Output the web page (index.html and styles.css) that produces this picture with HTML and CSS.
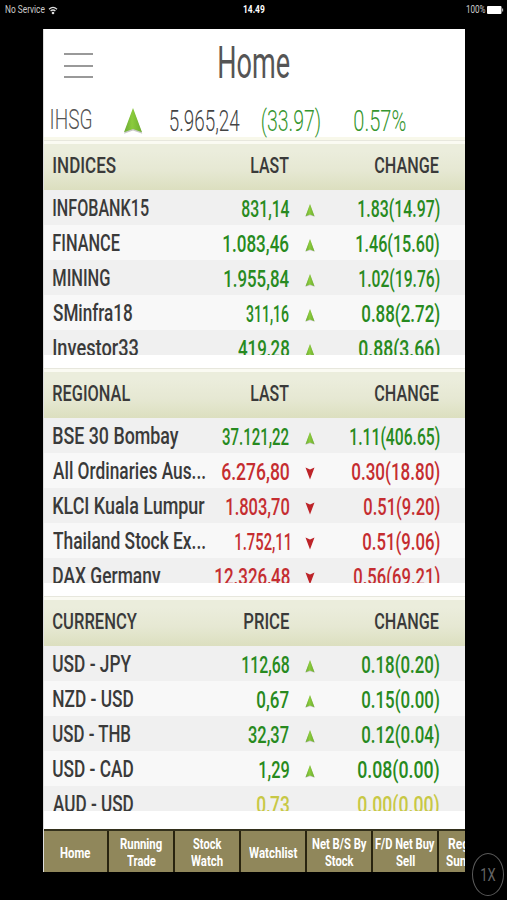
FILE: index.html
```html
<!DOCTYPE html>
<html lang="en">
<head>
<meta charset="utf-8">
<title>Home</title>
<link rel="stylesheet" href="styles.css">
</head>
<body>
<svg class="defs" width="0" height="0" aria-hidden="true">
  <defs>
    <linearGradient id="green" x1="0" y1="0" x2="1" y2="0"><stop offset="0" stop-color="#6aaa35"/><stop offset=".45" stop-color="#8bcb3c"/><stop offset="1" stop-color="#6cad30"/></linearGradient>
    <symbol id="up" viewBox="0 0 20 26"><path d="M10 .5 19.3 25 10 21.8 1 25Z" fill="#9a9a9a" opacity=".55" transform="translate(0 .7)"/><path d="M10 0 19 24.3 10 21 1 24.3Z" fill="url(#green)"/></symbol>
    <symbol id="down" viewBox="0 0 20 26"><path d="M1 1 10 5 19 1 10 25Z" fill="#bd2328"/></symbol>
  </defs>
</svg>
<header class="status">
  <div class="status-side"><span class="fit" data-w="40">No Service</span>
    <svg class="wifi" viewBox="0 0 10 9"><path d="M1 3.2Q5-.4 9 3.2M2.6 5.1Q5 3 7.4 5.1" fill="none" stroke="#ddd" stroke-width="1.3"/><circle cx="5" cy="7" r="1.3" fill="#ddd"/></svg></div>
  <div class="status-time"><span class="fit" data-w="21.5">14.49</span></div>
  <div class="status-side status-right"><span class="fit" data-w="19.5">100%</span>
    <svg class="battery" viewBox="0 0 17 8"><rect width="14.5" height="8" rx="1" fill="#fff"/><path d="M15.3 2.6h.8v2.8h-.8z" fill="#fff"/></svg></div>
</header>
<main class="app">
  <div class="titlebar">
    <div class="menu"><i></i><i></i><i></i></div>
    <h1 class="title"><span class="fit" data-w="70.5">Home</span></h1>
  </div>
  <div class="ticker">
    <div class="t-name"><span class="fit" data-w="40.5">IHSG</span></div>
    <svg class="t-arrow"><use href="#up"/></svg>
    <div class="t-last"><span class="fit" data-w="70">5.965,24</span></div>
    <div class="t-points"><span class="fit" data-w="58">(33.97)</span></div>
    <div class="t-pct"><span class="fit" data-w="51.5">0.57%</span></div>
  </div>

  <section class="board">
    <div class="head"><div class="name"><span class="fit" data-w="62.5">INDICES</span></div><div class="num"><span class="fit" data-w="38">LAST</span></div><i></i><div class="num"><span class="fit" data-w="64">CHANGE</span></div></div>
    <div class="rows">
      <div class="row up"><div class="name"><span class="fit" data-w="96">INFOBANK15</span></div><div class="num"><span class="fit" data-w="47.5">831,14</span></div><svg class="mark"><use href="#up"/></svg><div class="num"><span class="fit" data-w="81.5">1.83(14.97)</span></div></div>
      <div class="row up"><div class="name"><span class="fit" data-w="67">FINANCE</span></div><div class="num"><span class="fit" data-w="66">1.083,46</span></div><svg class="mark"><use href="#up"/></svg><div class="num"><span class="fit" data-w="83">1.46(15.60)</span></div></div>
      <div class="row up"><div class="name"><span class="fit" data-w="57">MINING</span></div><div class="num"><span class="fit" data-w="65">1.955,84</span></div><svg class="mark"><use href="#up"/></svg><div class="num"><span class="fit" data-w="80.5">1.02(19.76)</span></div></div>
      <div class="row up"><div class="name"><span class="fit" data-w="79">SMinfra18</span></div><div class="num"><span class="fit" data-w="43">311,16</span></div><svg class="mark"><use href="#up"/></svg><div class="num"><span class="fit" data-w="77.5">0.88(2.72)</span></div></div>
      <div class="row up"><div class="name"><span class="fit" data-w="85">Investor33</span></div><div class="num"><span class="fit" data-w="51">419,28</span></div><svg class="mark"><use href="#up"/></svg><div class="num"><span class="fit" data-w="80.5">0.88(3.66)</span></div></div>
    </div>
  </section>

  <section class="board">
    <div class="head"><div class="name"><span class="fit" data-w="77">REGIONAL</span></div><div class="num"><span class="fit" data-w="38">LAST</span></div><i></i><div class="num"><span class="fit" data-w="64">CHANGE</span></div></div>
    <div class="rows">
      <div class="row up"><div class="name"><span class="fit" data-w="126">BSE 30 Bombay</span></div><div class="num"><span class="fit" data-w="67">37.121,22</span></div><svg class="mark"><use href="#up"/></svg><div class="num"><span class="fit" data-w="89.5">1.11(406.65)</span></div></div>
      <div class="row down"><div class="name"><span class="fit" data-w="152">All Ordinaries Aus...</span></div><div class="num"><span class="fit" data-w="67">6.276,80</span></div><svg class="mark"><use href="#down"/></svg><div class="num"><span class="fit" data-w="87.5">0.30(18.80)</span></div></div>
      <div class="row down"><div class="name"><span class="fit" data-w="151.5">KLCI Kuala Lumpur</span></div><div class="num"><span class="fit" data-w="63">1.803,70</span></div><svg class="mark"><use href="#down"/></svg><div class="num"><span class="fit" data-w="75.5">0.51(9.20)</span></div></div>
      <div class="row down"><div class="name"><span class="fit" data-w="152">Thailand Stock Ex...</span></div><div class="num"><span class="fit" data-w="54.5">1.752,11</span></div><svg class="mark"><use href="#down"/></svg><div class="num"><span class="fit" data-w="76.5">0.51(9.06)</span></div></div>
      <div class="row down"><div class="name"><span class="fit" data-w="108">DAX Germany</span></div><div class="num"><span class="fit" data-w="74.5">12.326,48</span></div><svg class="mark"><use href="#down"/></svg><div class="num"><span class="fit" data-w="85.5">0.56(69.21)</span></div></div>
    </div>
  </section>

  <section class="board">
    <div class="head"><div class="name"><span class="fit" data-w="84">CURRENCY</span></div><div class="num"><span class="fit" data-w="45.5">PRICE</span></div><i></i><div class="num"><span class="fit" data-w="64">CHANGE</span></div></div>
    <div class="rows">
      <div class="row up"><div class="name"><span class="fit" data-w="78">USD - JPY</span></div><div class="num"><span class="fit" data-w="47">112,68</span></div><svg class="mark"><use href="#up"/></svg><div class="num"><span class="fit" data-w="77">0.18(0.20)</span></div></div>
      <div class="row up"><div class="name"><span class="fit" data-w="80">NZD - USD</span></div><div class="num"><span class="fit" data-w="32">0,67</span></div><svg class="mark"><use href="#up"/></svg><div class="num"><span class="fit" data-w="77">0.15(0.00)</span></div></div>
      <div class="row up"><div class="name"><span class="fit" data-w="78">USD - THB</span></div><div class="num"><span class="fit" data-w="41">32,37</span></div><svg class="mark"><use href="#up"/></svg><div class="num"><span class="fit" data-w="77">0.12(0.04)</span></div></div>
      <div class="row up"><div class="name"><span class="fit" data-w="80">USD - CAD</span></div><div class="num"><span class="fit" data-w="30">1,29</span></div><svg class="mark"><use href="#up"/></svg><div class="num"><span class="fit" data-w="81">0.08(0.00)</span></div></div>
      <div class="row flat"><div class="name"><span class="fit" data-w="80">AUD - USD</span></div><div class="num"><span class="fit" data-w="32">0,73</span></div><i></i><div class="num"><span class="fit" data-w="81">0.00(0.00)</span></div></div>
    </div>
  </section>

  <nav class="tabs">
    <a class="tab"><span class="fit" data-w="30.5">Home</span></a>
    <a class="tab"><span class="fit" data-w="42">Running</span><span class="fit" data-w="29">Trade</span></a>
    <a class="tab"><span class="fit" data-w="28.5">Stock</span><span class="fit" data-w="32">Watch</span></a>
    <a class="tab"><span class="fit" data-w="48.5">Watchlist</span></a>
    <a class="tab"><span class="fit" data-w="55">Net B/S By</span><span class="fit" data-w="28.5">Stock</span></a>
    <a class="tab"><span class="fit" data-w="60">F/D Net Buy</span><span class="fit" data-w="18.5">Sell</span></a>
    <a class="tab"><span class="fit" data-w="47">Regional</span><span class="fit" data-w="51">Summary</span></a>
  </nav>
</main>
<div class="zoom"><span class="fit" data-w="14.5">1X</span></div>
<script src="fit.js"></script>
</body>
</html>
```
FILE: styles.css
```css
* { box-sizing: border-box; }
body {
  margin: 0;
  width: 507px;
  height: 900px;
  overflow: hidden;
  background: #000;
  font-family: Roboto, "Liberation Sans", sans-serif;
  color: #3a3a3a;
}
.defs { position: absolute; }
.fit { display: block; flex: none; white-space: nowrap; transform-origin: 0 50%; }

.status { display: flex; height: 29px; padding: 0 3.5px 0 4.5px; color: #ccc; font-size: 11px; line-height: 20px; }
.status-side { display: flex; width: 200px; }
.status-time { flex: 1; display: flex; justify-content: center; color: #fff; font-weight: 700; }
.status-right { justify-content: flex-end; }
.wifi { width: 10px; height: 9px; margin: 6px 0 0 3px; }
.battery { width: 17px; height: 8px; margin: 6px 0 0 1.5px; }

.app { width: 422px; height: 843px; margin-left: 43px; background: #fff; border-left: 1px solid #ddd; overflow: hidden; }
.titlebar { display: grid; grid-template-columns: 60px 1fr 60px; height: 73px; padding: 0 20px 0 20px; }
.menu { display: flex; flex-direction: column; gap: 9.7px; padding-top: 24px; }
.menu i { width: 29px; height: 2px; background: #999; flex: none; }
.title { display: flex; justify-content: center; margin: 0; font-size: 45px; font-weight: 400; line-height: 67px; color: #555; }

.ticker { display: grid; grid-template-columns: 73px 46.5px 92px 92px 1fr; height: 35px; padding-left: 6.5px; font-size: 30px; font-weight: 300; line-height: 38px; }
.ticker > div { display: flex; }
.ticker .t-name { padding-top: 2px; font-size: 27px; line-height: 33px; color: #555; }
.t-arrow { width: 20px; height: 26px; margin: 6px 0 0 -1px; }
.t-last { color: #444; }
.t-points, .t-pct { color: #36962f; }

.board { height: 228px; overflow: hidden; }
.board:nth-of-type(1) { height: 231px; border-top: 3px solid #f8f8ea; }
.board:nth-of-type(3) { height: 233px; }
.head, .row { display: grid; grid-template-columns: 136.5px 100px 41px 109px; padding-left: 8.5px; }
.head { height: 50px; padding-top: 4px; border-top: 1px solid #e7e7dd; font-size: 22.8px; font-weight: 500; line-height: 42px;
  background: linear-gradient(#fafaf2 0 3px, #ebeddc 3px 10px, #e6e8d3 60%, #dcdfbf); }
.rows { height: 165px; overflow: hidden; }
.row { height: 35.1px; font-size: 23px; font-weight: 500; line-height: 35px; background: #f0f0f0; }
.row:nth-child(even) { background: #f8f8f8; }
.name { display: flex; }
.num { display: flex; justify-content: flex-end; }
.row .name { padding-top: 1px; }
.row .num { padding-top: 2px; }
.up .num { color: #278a20; }
.down .num { color: #c52d30; }
.flat .num { color: #c8c845; }
.mark { width: 10px; height: 13px; margin: 14px 0 0 15.5px; }

.tabs { display: flex; height: 43px; margin-left: -1px; border-top: 2px solid #33301c; overflow: hidden; background: #90875b; }
.tab { display: flex; flex: 0 0 66px; flex-direction: column; align-items: center; justify-content: center; border-right: 2px solid #29240f; color: #fff; font-size: 14.5px; font-weight: 700; line-height: 17px; padding-top: 3px; }

.zoom { position: absolute; left: 472px; top: 853px; width: 32px; height: 43px; border: 1.5px solid #5a5a5a; border-radius: 50%; display: flex; justify-content: center; color: #666; font-size: 18px; line-height: 41px; }
```
FILE: fit.js
```js
// Condenses each label horizontally so its ink spans the width in data-w.
const ctx = document.createElement('canvas').getContext('2d');
document.querySelectorAll('.fit').forEach(el => {
  const cs = getComputedStyle(el);
  ctx.font = `${cs.fontWeight} ${cs.fontSize} ${cs.fontFamily}`;
  const m = ctx.measureText(el.textContent);
  const target = parseFloat(el.dataset.w);
  const scale = target / (m.actualBoundingBoxRight + m.actualBoundingBoxLeft);
  el.style.width = `${target}px`;
  el.style.transform = `translateX(${m.actualBoundingBoxLeft * scale}px) scaleX(${scale})`;
});
```
